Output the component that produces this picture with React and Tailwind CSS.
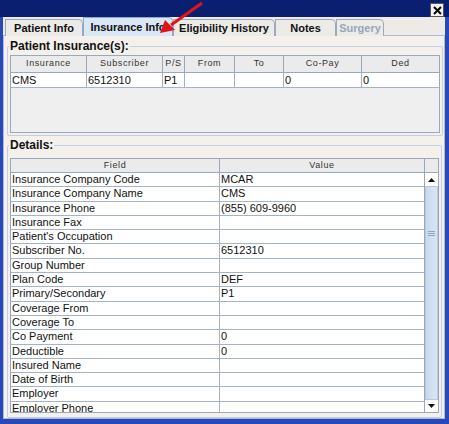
import React from 'react';

const tabs = [
  { label: 'Patient Info', w: 'w-[78px]' },
  { label: 'Insurance Info', w: 'w-[90px]', active: true },
  { label: 'Eligibility History', w: 'w-[102px]' },
  { label: 'Notes', w: 'w-[61px]' },
  { label: 'Surgery', w: 'w-[48px]', disabled: true },
];

const insCols = [
  { label: 'Insurance', w: 'w-[76px]' },
  { label: 'Subscriber', w: 'w-[76px]' },
  { label: 'P/S', w: 'w-[22px]' },
  { label: 'From', w: 'w-[50px]' },
  { label: 'To', w: 'w-[49px]' },
  { label: 'Co-Pay', w: 'w-[78px]' },
  { label: 'Ded', w: 'w-[77px]' },
];
const insRow = ['CMS', '6512310', 'P1', '', '', '0', '0'];

const details = [
  ['Insurance Company Code', 'MCAR'],
  ['Insurance Company Name', 'CMS'],
  ['Insurance Phone', '(855) 609-9960'],
  ['Insurance Fax', ''],
  ["Patient's Occupation", ''],
  ['Subscriber No.', '6512310'],
  ['Group Number', ''],
  ['Plan Code', 'DEF'],
  ['Primary/Secondary', 'P1'],
  ['Coverage From', ''],
  ['Coverage To', ''],
  ['Co Payment', '0'],
  ['Deductible', '0'],
  ['Insured Name', ''],
  ['Date of Birth', ''],
  ['Employer', ''],
  ['Employer Phone', ''],
];

const font = { fontFamily: '"Liberation Sans", Arial, sans-serif' };

export default function App() {
  return (
    <div className="relative w-[449px] h-[424px] overflow-hidden bg-[#2a48b8] flex flex-col" style={font}>
      {/* title bar */}
      <div className="h-[19px] bg-[#0b1f70] flex items-start justify-end pr-[5px] pt-[3px]">
        <div className="w-[14px] h-[14px] bg-[#f2f2f2] border border-[#555] flex items-center justify-center">
          <svg width="9" height="9" viewBox="0 0 9 9">
            <path d="M1 1L8 8M8 1L1 8" stroke="#000" strokeWidth="2" />
          </svg>
        </div>
      </div>

      {/* window body */}
      <div className="flex-1 ml-[3px] mr-[4px] mb-[6px] bg-[#eeebe6] flex flex-col">
        {/* tabs */}
        <div className="h-[19px] flex items-end pl-[2px] border-b border-[#a9bbd6]">
          {tabs.map((t) => (
            <div
              key={t.label}
              className={
                'flex items-center justify-center border border-b-0 rounded-tr-[5px] text-[11px] font-bold -mb-px ' +
                t.w +
                ' ' +
                (t.active
                  ? 'h-[19px] bg-[#d9e6f6] border-[#8fa6c8] text-[#111]'
                  : 'h-[17px] bg-[#ecebe8] border-[#9aa9bf] ' + (t.disabled ? 'text-[#98a6b9]' : 'text-[#111]'))
              }
            >
              {t.label}
            </div>
          ))}
        </div>

        {/* content panel */}
        <div className="flex-1 bg-[#f4f1ec] border-x border-b border-[#a9bbd6] px-[3px] pt-[3px] flex flex-col">
          <fieldset className="border border-[#c3cfe0] rounded-[2px] px-[2px] pb-[3px] h-[97px]">
            <legend className="text-[12px] font-bold text-[#111] px-[1px] -ml-[1px] leading-[14px]">Patient Insurance(s):</legend>
            <div className="border border-[#98a8bf] bg-[#efefef] h-[78px] mt-[2px]">
              <div className="flex h-[17px] bg-[#ebebeb] border-b border-[#98a8bf]">
                {insCols.map((c, i) => (
                  <div
                    key={c.label}
                    className={
                      'flex items-center justify-center text-[9px] tracking-[0.6px] text-[#333] ' +
                      c.w +
                      (i < insCols.length - 1 ? ' border-r border-[#98a8bf]' : '')
                    }
                  >
                    {c.label}
                  </div>
                ))}
              </div>
              <div className="flex h-[15px] bg-white">
                {insRow.map((v, i) => (
                  <div
                    key={i}
                    className={
                      'flex items-center pl-[1px] text-[11px] text-[#111] border-b border-[#a4b3c8] ' +
                      insCols[i].w +
                      (i < insRow.length - 1 ? ' border-r' : '')
                    }
                  >
                    {v}
                  </div>
                ))}
              </div>
            </div>
          </fieldset>

          <fieldset className="mt-[2px] flex-1 min-h-0 border border-[#c3cfe0] rounded-[2px] px-[2px] pb-[4px]">
            <legend className="text-[12px] font-bold text-[#111] px-[1px] -ml-[1px] leading-[14px]">Details:</legend>
            <div className="flex h-[255px] mt-[6px] border border-[#98a8bf] overflow-hidden">
              <div className="w-[413px] flex flex-col">
                <div className="flex h-[14px] bg-[#ebebeb] border-b border-[#98a8bf] shrink-0">
                  <div className="w-[209px] border-r border-[#98a8bf] flex items-center justify-center text-[9px] tracking-[0.6px] text-[#333]">Field</div>
                  <div className="flex-1 flex items-center justify-center text-[9px] tracking-[0.6px] text-[#333]">Value</div>
                </div>
                {details.map(([f, v]) => (
                  <div key={f} className="flex h-[14.3px] shrink-0 bg-white border-b border-[#a4b3c8] text-[11px] text-[#111] leading-[13px]">
                    <div className="w-[209px] border-r border-[#a4b3c8] pl-[1px] overflow-hidden">{f}</div>
                    <div className="flex-1 pl-[1px]">{v}</div>
                  </div>
                ))}
              </div>
              {/* scrollbar */}
              <div className="w-[14px] border-l border-[#98a8bf] flex flex-col bg-[#e6eef8]">
                <div className="h-[14px] bg-[#ebebeb] border-b border-[#98a8bf]" />
                <div className="h-[14px] bg-white border-b border-[#b9c8dc] flex items-center justify-center">
                  <svg width="7" height="4" viewBox="0 0 7 4"><path d="M0 4L3.5 0L7 4Z" fill="#111" /></svg>
                </div>
                <div className="flex-1 bg-gradient-to-r from-[#c9d9ee] to-[#dbe6f4] border-x border-[#b7c8df] flex flex-col justify-start">
                  <div className="mt-[44px] flex flex-col items-center gap-[1px]">
                    <div className="w-[7px] h-px bg-[#8ea4c4]" />
                    <div className="w-[7px] h-px bg-[#8ea4c4]" />
                    <div className="w-[7px] h-px bg-[#8ea4c4]" />
                  </div>
                </div>
                <div className="h-[13px] bg-white border-t border-[#b9c8dc] flex items-center justify-center">
                  <svg width="7" height="4" viewBox="0 0 7 4"><path d="M0 0L3.5 4L7 0Z" fill="#111" /></svg>
                </div>
              </div>
            </div>
          </fieldset>
        </div>
      </div>

      {/* red annotation arrow */}
      <svg className="absolute left-0 top-0 pointer-events-none" width="449" height="424">
        <path d="M202 3L171 25" stroke="#e0151a" strokeWidth="3" />
        <path d="M160 33L165 20L175 30Z" fill="#e0151a" />
      </svg>
    </div>
  );
}
